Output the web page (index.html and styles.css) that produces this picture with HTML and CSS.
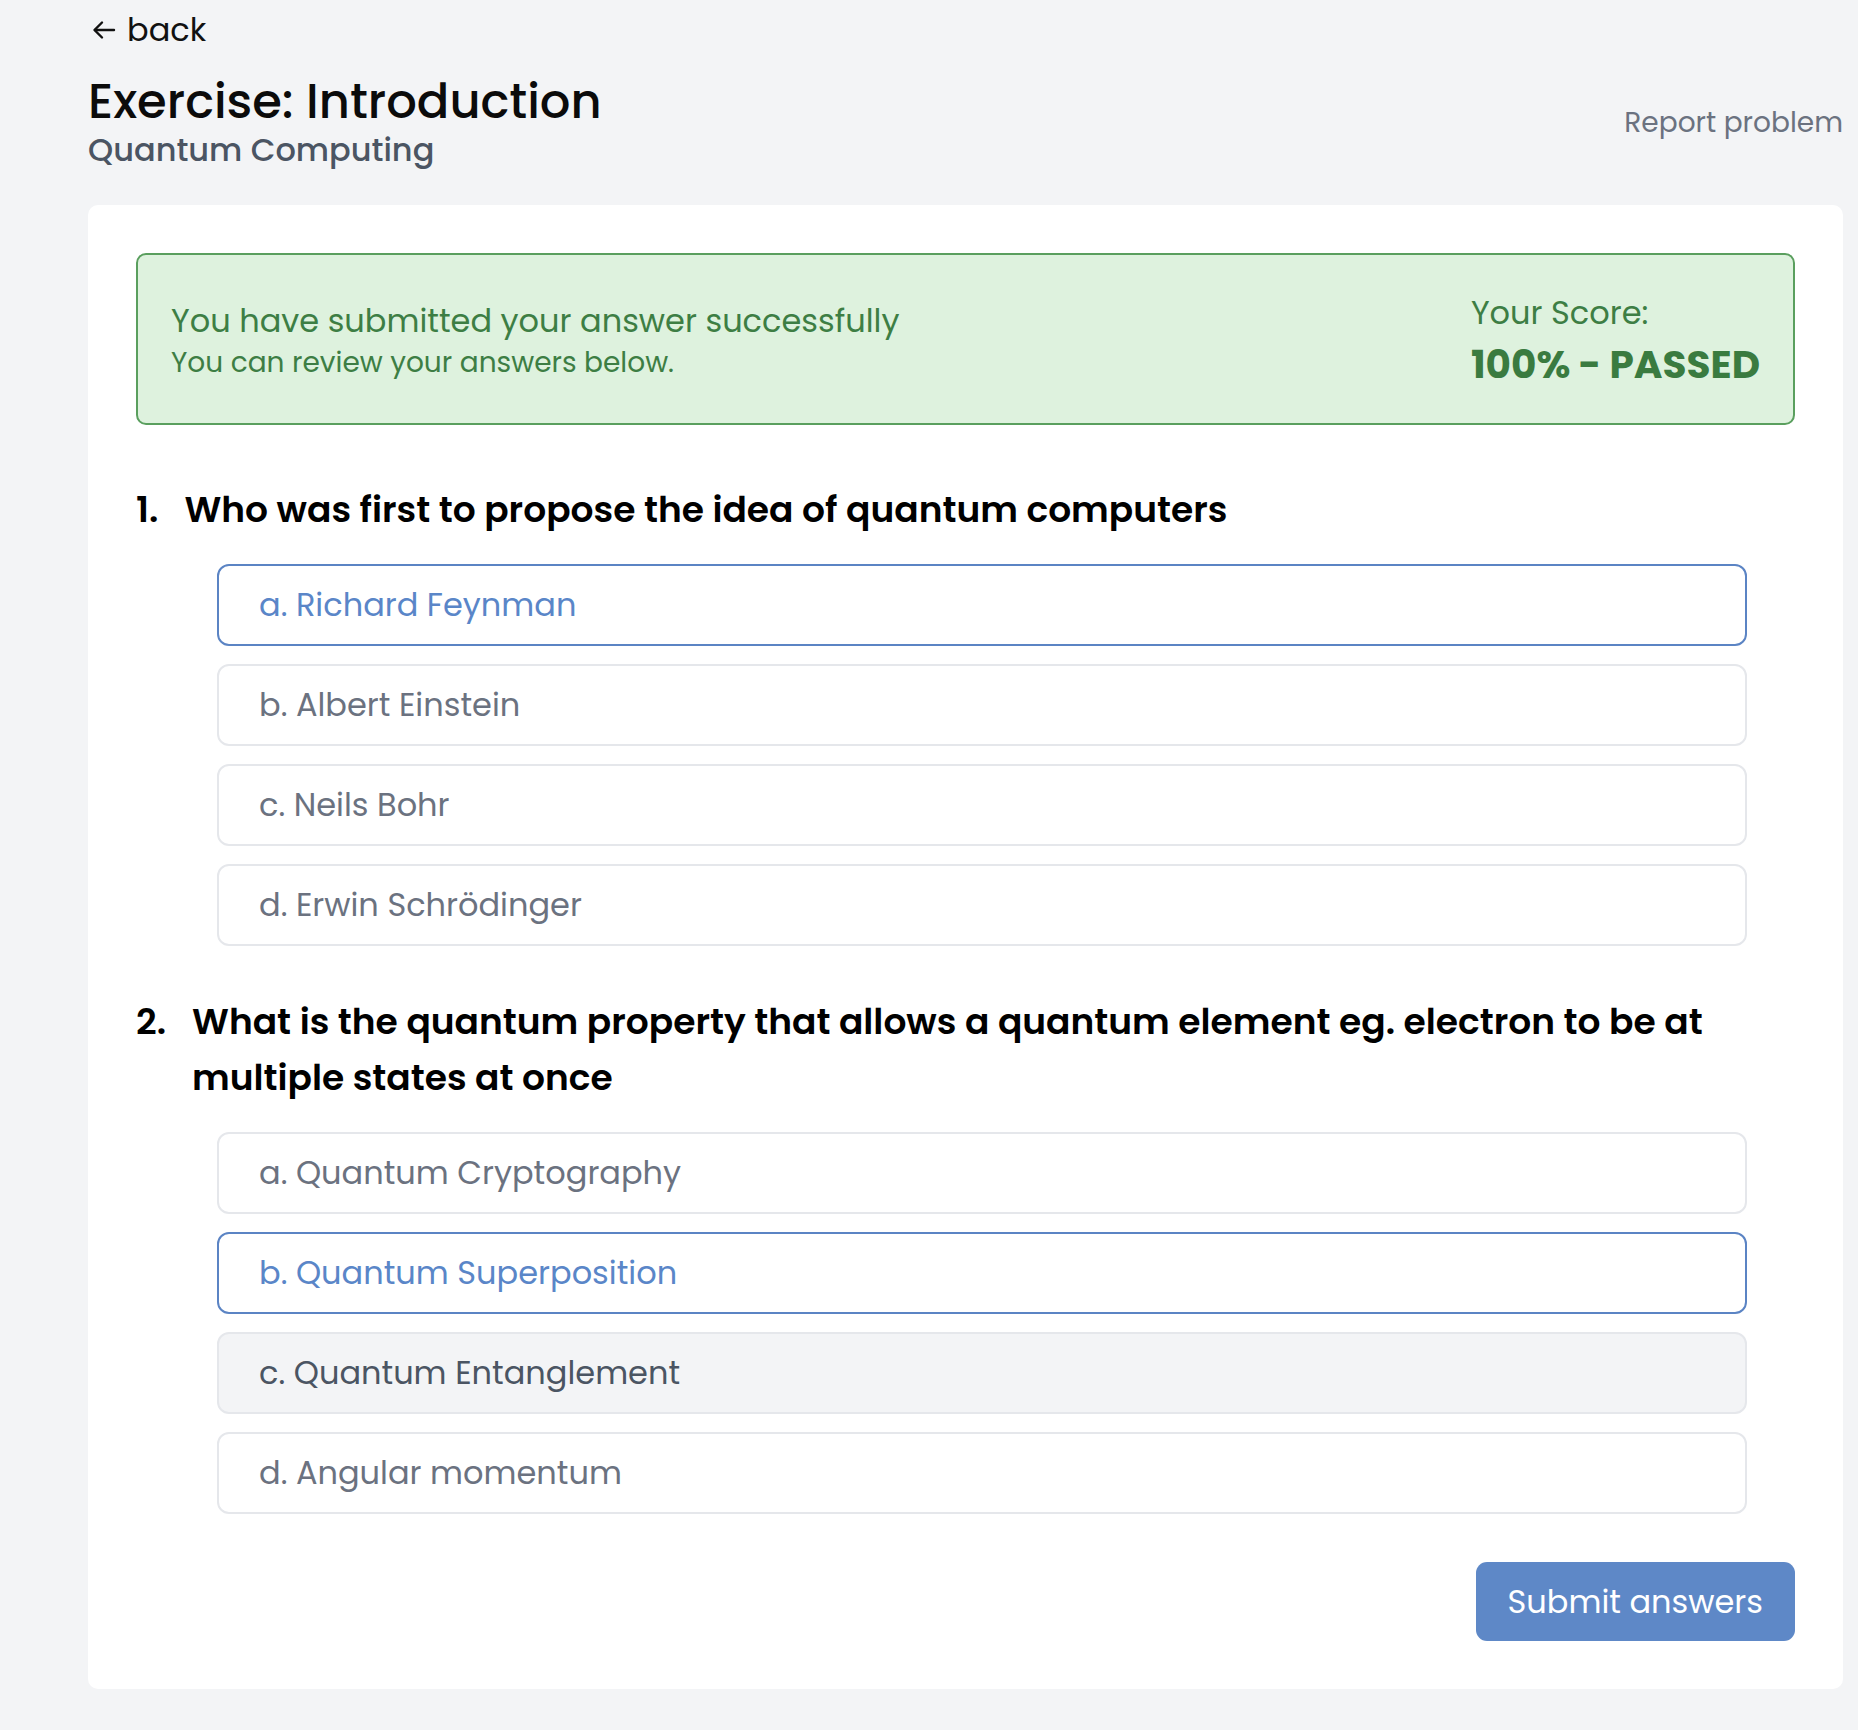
FILE: index.html
```html
<!DOCTYPE html>
<html lang="en">
<head>
<meta charset="utf-8">
<title>Exercise: Introduction</title>
<link rel="stylesheet" href="styles.css">
</head>
<body>
<div class="page">
  <a class="back" href="#">
    <svg class="back-icon" width="24" height="20" viewBox="0 0 24 20" fill="none" stroke="currentColor" stroke-width="2.4" stroke-linecap="round" stroke-linejoin="round"><path d="M22 10H3"/><path d="M10 2.5L2.5 10L10 17.5"/></svg>
    <span>back</span>
  </a>
  <header class="header">
    <div class="titles">
      <h1 class="title">Exercise: Introduction</h1>
      <div class="subtitle">Quantum Computing</div>
    </div>
    <a class="report" href="#">Report problem</a>
  </header>

  <main class="card">
    <section class="result">
      <div class="result-msg">
        <div class="result-main">You have submitted your answer successfully</div>
        <div class="result-sub">You can review your answers below.</div>
      </div>
      <div class="score">
        <div class="score-label">Your Score:</div>
        <div class="score-value">100% - PASSED</div>
      </div>
    </section>

    <section class="question">
      <div class="q-title"><span class="q-num">1.</span><span class="q-text">Who was first to propose the idea of quantum computers</span></div>
      <div class="options">
        <div class="option selected">a. Richard Feynman</div>
        <div class="option">b. Albert Einstein</div>
        <div class="option">c. Neils Bohr</div>
        <div class="option">d. Erwin Schrödinger</div>
      </div>
    </section>

    <section class="question">
      <div class="q-title"><span class="q-num">2.</span><span class="q-text">What is the quantum property that allows a quantum element eg. electron to be at multiple states at once</span></div>
      <div class="options">
        <div class="option">a. Quantum Cryptography</div>
        <div class="option selected">b. Quantum Superposition</div>
        <div class="option hover">c. Quantum Entanglement</div>
        <div class="option">d. Angular momentum</div>
      </div>
    </section>

    <div class="actions">
      <button class="submit" type="button">Submit answers</button>
    </div>
  </main>
</div>
</body>
</html>
```
FILE: styles.css
```css
* { box-sizing: border-box; }
html, body { margin: 0; padding: 0; }
body {
  background: #f3f4f6;
  font-family: "Poppins", "Inter", "Noto Sans", sans-serif;
  color: #111827;
}
.page {
  padding: 10px 15px 41px 88px;
}
.back {
  display: flex;
  align-items: center;
  gap: 11px;
  height: 40px;
  padding-left: 4px;
  font-size: 32px;
  color: #111111;
  text-decoration: none;
}
.back-icon { display: block; }
.header {
  display: flex;
  justify-content: space-between;
  align-items: center;
  margin-top: 24px;
}
.title {
  margin: 0;
  font-size: 48px;
  line-height: 56px;
  font-weight: 500;
  color: #0b0b0b;
  letter-spacing: 0;
}
.subtitle {
  font-size: 32px;
  line-height: 40px;
  font-weight: 500;
  color: #4b5563;
}
.report {
  font-size: 28px;
  color: #6b7280;
  text-decoration: none;
  margin-top: 2px;
}
.card {
  margin-top: 35px;
  background: #ffffff;
  border-radius: 10px;
  padding: 48px;
}
.result {
  display: flex;
  justify-content: space-between;
  align-items: center;
  height: 172px;
  padding: 0 33px;
  background: #def2de;
  border: 2px solid #5a9f5e;
  border-radius: 10px;
  color: #3d7e44;
}
.result-msg { margin-top: 3px; }
.result-main { font-size: 32px; line-height: 44px; }
.result-sub { font-size: 28px; line-height: 40px; }
.score { display: flex; flex-direction: column; gap: 4px; margin-top: 3px; }
.score-label { font-size: 32px; line-height: 44px; }
.score-value { font-size: 39px; line-height: 52px; font-weight: 700; color: #3a7b40; }

.question { margin-top: 48px; }
.result + .question { margin-top: 57px; }
.q-title {
  display: flex;
  gap: 26px;
  font-size: 36px;
  line-height: 56px;
  font-weight: 600;
  color: #000000;
}
.options {
  display: flex;
  flex-direction: column;
  gap: 18px;
  margin: 26px 48px 0 81px;
}
.option {
  display: flex;
  align-items: center;
  height: 82px;
  padding: 0 40px;
  border: 2px solid #e5e7eb;
  border-radius: 12px;
  background: #ffffff;
  font-size: 32px;
  color: #6b7280;
}
.option.selected {
  border-color: #5b84c4;
  color: #5a86c8;
}
.option.hover {
  background: #f3f4f6;
  color: #4b5563;
}
.actions {
  display: flex;
  justify-content: flex-end;
  margin-top: 48px;
}
.submit {
  height: 79px;
  padding: 0 32px;
  border: none;
  border-radius: 11px;
  background: #5e88c7;
  color: #ffffff;
  font-family: inherit;
  font-size: 32px;
  cursor: pointer;
}
```
